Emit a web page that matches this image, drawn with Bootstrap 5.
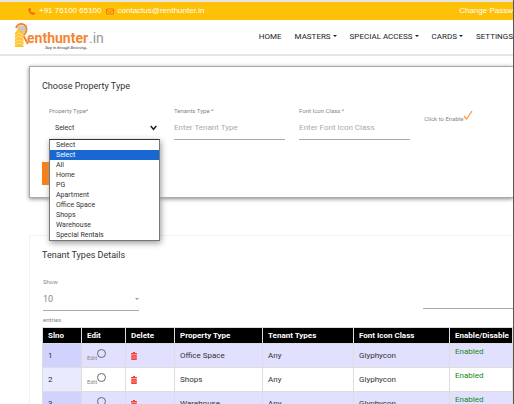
<!DOCTYPE html>
<html lang="en">
<head>
<meta charset="utf-8">
<meta name="viewport" content="width=device-width, initial-scale=1">
<title>Renthunter.in</title>
<link href="https://cdn.jsdelivr.net/npm/bootstrap@5.3.0/dist/css/bootstrap.min.css" rel="stylesheet">
<style>
body{font-family:Roboto,"Liberation Sans",Arial,sans-serif;font-size:8px;line-height:12px;color:#333;border-right:1px solid #555}
a{color:inherit;text-decoration:none}
.topbar{background:#ffc107;border-top:2px solid #e4e4e4;height:20px;padding-left:28px;color:#fff;font-family:"Liberation Sans",Arial,sans-serif;font-size:8px}
.topbar svg{margin-right:4px}
.mainnav{height:36px;padding-left:15px;border-bottom:2px solid #e6e6e6;background:#fff}
.menu{gap:13px;color:#222}
.menu .dropdown-toggle::after{border-width:2px;border-bottom:0;margin-left:2px;vertical-align:2px}
.panel{margin-left:29px;padding:0 0 0 12px;background:#fff}
.panel-form{margin-top:10px;height:132px;border:1px solid #aaa;border-right:0;box-shadow:0 1px 4px #888}
.panel-list{margin-top:37px;border:1px solid #f3f3f3;border-right:0}
h2{font-size:9px;line-height:14px;font-weight:400;margin:0;padding-top:12px;color:#333}
.fields{display:grid;grid-template-columns:5fr 5fr 5fr 4fr;column-gap:14px;padding:13px 0 0 7px}
.tag{display:block;font-size:6px;line-height:10px;color:#888}
.line{display:block;width:100%;height:24px;border:0;border-bottom:1px solid #aaa;border-radius:0;background:transparent;padding:0;font-size:8px;line-height:14px;color:#888;outline:0}
.line::placeholder{color:#aaa;opacity:1}
select.line{appearance:none;font-size:9px}
select.line.picker{font-size:7px;color:#333;padding-left:6px}
.chev{right:3px;top:9px;pointer-events:none}
.options{top:100%;left:0;right:0;margin-top:-1px;z-index:5;background:#fff;border:1px solid #777;border-top:1px solid #333;box-shadow:1px 2px 6px #999;color:#333}
.options li{line-height:10px;font-size:7px;padding-left:6px;white-space:nowrap}
.options li.active{background:#1967d2;color:#fff}
.submit{width:60px;height:23px;border:0;border-radius:0;background:#fd7e14;margin-top:22px}
.show-tools{padding:15px 0 0 1px}
.show-size{width:96px}
.caret{right:0;top:11px;border:2px solid transparent;border-top-color:#999;border-bottom:0}
.search{width:90px}
.grid-table{table-layout:fixed;width:100%;margin:2px 0 0;font-size:8px;line-height:12px;border-collapse:collapse}
.grid-table th{background:#000;color:#fff;height:16px;padding:1px 5px;border:1px solid #ddd;font-weight:700;white-space:nowrap}
.grid-table td{height:24px;padding:0 5px;border:1px solid #ddd;vertical-align:middle;color:#333}
.grid-table tbody tr:nth-child(odd) td{background:#e1e1ff}
.grid-table tbody td:first-child{background:#eaeaff}
.grid-table tbody tr:nth-child(odd) td:first-child{background:#d2d2ff}
.grid-table td.state{color:#138a13;vertical-align:top;padding-top:2px}
.grid-table button{border:0;background:none;padding:0;display:block}
.pick{appearance:none;width:9px;height:9px;border:1px solid #666;border-radius:50%;margin:0}
.c1{width:39px}.c2{width:44px}.c3{width:49px}.c4{width:88px}.c5{width:91px}.c6{width:96px}
</style>
</head>
<body class="vh-100 overflow-hidden bg-white">
<div class="topbar d-flex align-items-center text-nowrap overflow-hidden">
  <a href="#" class="d-flex align-items-center"><svg width="7" height="7" viewBox="0 0 16 16"><path fill="#f4661b" d="M3 0 6 1 7 5 5 7Q7 10 10 11L12 9 16 11 15 14 12 16Q7 15 3 10 0 6 1 2Z"/></svg>+91 76100 65100</a>
  <a href="#" class="d-flex align-items-center ms-1"><svg width="8" height="7" viewBox="0 0 16 14"><path fill="none" stroke="#f4661b" stroke-width="1.6" d="M1 2H15V12H1ZM1 4 8 9 15 4"/></svg>contactus@renthunter.in</a>
  <a href="#" class="ms-auto">Change Passw</a>
</div>
<nav class="mainnav d-flex align-items-center text-nowrap overflow-hidden">
  <a href="#" aria-label="Renthunter.in"><svg class="d-block" width="90" height="30" viewBox="0 0 90 30">
    <circle cx="6.500" cy="7.500" r="4" fill="#c8c8c8"/>
    <path fill="none" stroke="#f58634" stroke-width="2" d="M1 6Q3 1.500 7 2 12 3 11.500 8 11 12 8 13L13 22"/>
    <path fill="#ffc52e" d="M0 11 4 6 8.500 11V25H0Z"/><path fill="none" stroke="#fff" stroke-width=".5" d="M0 14 4 11 9 14M0 17 4 14 9 17M0 20 4 18 9 20M0 23 4 21 9 23"/>
    <g font-family="Roboto, Liberation Sans, sans-serif"><text x="12" y="21" font-size="14" font-weight="700" fill="#f58634">enthunter</text><text x="74" y="21" font-size="14" fill="#999">.in</text></g>
    <text x="30" y="27" font-size="4" font-style="italic" font-family="Liberation Serif, serif" fill="#222">Step in through Browsing..</text></svg></a>
  <div class="menu d-flex ms-auto">
    <a href="#">HOME</a><a href="#" class="dropdown-toggle">MASTERS</a><a href="#" class="dropdown-toggle">SPECIAL ACCESS</a><a href="#" class="dropdown-toggle">CARDS</a><a href="#">SETTINGS</a>
  </div>
</nav>
<main>
  <section class="panel panel-form">
    <h2>Choose Property Type</h2>
    <form>
      <div class="fields">
        <div class="position-relative">
          <label class="tag" for="ptype">Property Type*</label>
          <div class="position-relative">
            <select id="ptype" class="line picker"><option>Select</option></select>
            <svg class="chev position-absolute" width="7" height="6" viewBox="0 0 7 6"><path fill="none" stroke="#222" stroke-width="1.5" d="M.7 1 3.5 4.3 6.3 1"/></svg>
            <ul class="options position-absolute list-unstyled mb-0">
              <li>Select</li><li class="active">Select</li><li>All</li><li>Home</li><li>PG</li><li>Apartment</li><li>Office Space</li><li>Shops</li><li>Warehouse</li><li>Special Rentals</li>
            </ul>
          </div>
        </div>
        <div><label class="tag" for="tenant">Tenants Type *</label><input id="tenant" class="line" placeholder="Enter Tenant Type"></div>
        <div><label class="tag" for="icon">Font Icon Class *</label><input id="icon" class="line" placeholder="Enter Font Icon Class"></div>
        <div class="pt-1"><button type="button" class="btn p-0 border-0 d-flex align-items-end"><span class="tag">Click to Enable</span><svg width="10" height="14" viewBox="0 0 10 14"><path fill="none" stroke="#fb953d" stroke-width="1.2" d="M1 6 3.500 9 9 1"/></svg></button></div>
      </div>
      <button type="button" class="submit d-block" aria-label="Submit"></button>
    </form>
  </section>
  <section class="panel panel-list">
    <h2 class="pt-2 mt-1">Tenant Types Details</h2>
    <div class="show-tools d-flex justify-content-between">
      <div class="show-size">
        <label class="tag" for="size">Show</label>
        <div class="position-relative"><select id="size" class="line"><option>10</option></select><span class="caret position-absolute"></span></div>
        <span class="tag mt-1">entries</span>
      </div>
      <div class="search pt-2"><input class="line" aria-label="Search"></div>
    </div>
    <table class="grid-table">
      <colgroup><col class="c1"><col class="c2"><col class="c3"><col class="c4"><col class="c5"><col class="c6"><col></colgroup>
      <thead><tr><th>Slno</th><th>Edit</th><th>Delete</th><th>Property Type</th><th>Tenant Types</th><th>Font Icon Class</th><th>Enable/Disable</th></tr></thead>
      <tbody>
        <tr><td>1</td><td><div class="d-flex"><label class="tag pt-1" for="e1">Edit</label><input id="e1" type="radio" name="e" class="pick"></div></td><td><button type="button" aria-label="Delete"><svg class="d-block" width="6" height="8" viewBox="0 0 6 8"><path fill="#f44336" d="M2 0H4V1H6V2H0V1H2ZM.3 2.500H5.700V8H.3Z"/><path stroke="#fbb" stroke-width=".6" d="M2 3.500V7M4 3.500V7"/></svg></button></td><td>Office Space</td><td>Any</td><td>Glyphycon</td><td class="state">Enabled</td></tr>
        <tr><td>2</td><td><div class="d-flex"><label class="tag pt-1" for="e2">Edit</label><input id="e2" type="radio" name="e" class="pick"></div></td><td><button type="button" aria-label="Delete"><svg class="d-block" width="6" height="8" viewBox="0 0 6 8"><path fill="#f44336" d="M2 0H4V1H6V2H0V1H2ZM.3 2.500H5.700V8H.3Z"/><path stroke="#fbb" stroke-width=".6" d="M2 3.500V7M4 3.500V7"/></svg></button></td><td>Shops</td><td>Any</td><td>Glyphycon</td><td class="state">Enabled</td></tr>
        <tr><td>3</td><td><div class="d-flex"><label class="tag pt-1" for="e3">Edit</label><input id="e3" type="radio" name="e" class="pick"></div></td><td><button type="button" aria-label="Delete"><svg class="d-block" width="6" height="8" viewBox="0 0 6 8"><path fill="#f44336" d="M2 0H4V1H6V2H0V1H2ZM.3 2.500H5.700V8H.3Z"/><path stroke="#fbb" stroke-width=".6" d="M2 3.500V7M4 3.500V7"/></svg></button></td><td>Warehouse</td><td>Any</td><td>Glyphycon</td><td class="state">Enabled</td></tr>
      </tbody>
    </table>
  </section>
</main>
<script src="https://cdn.jsdelivr.net/npm/bootstrap@5.3.0/dist/js/bootstrap.bundle.min.js"></script>
</body>
</html>
